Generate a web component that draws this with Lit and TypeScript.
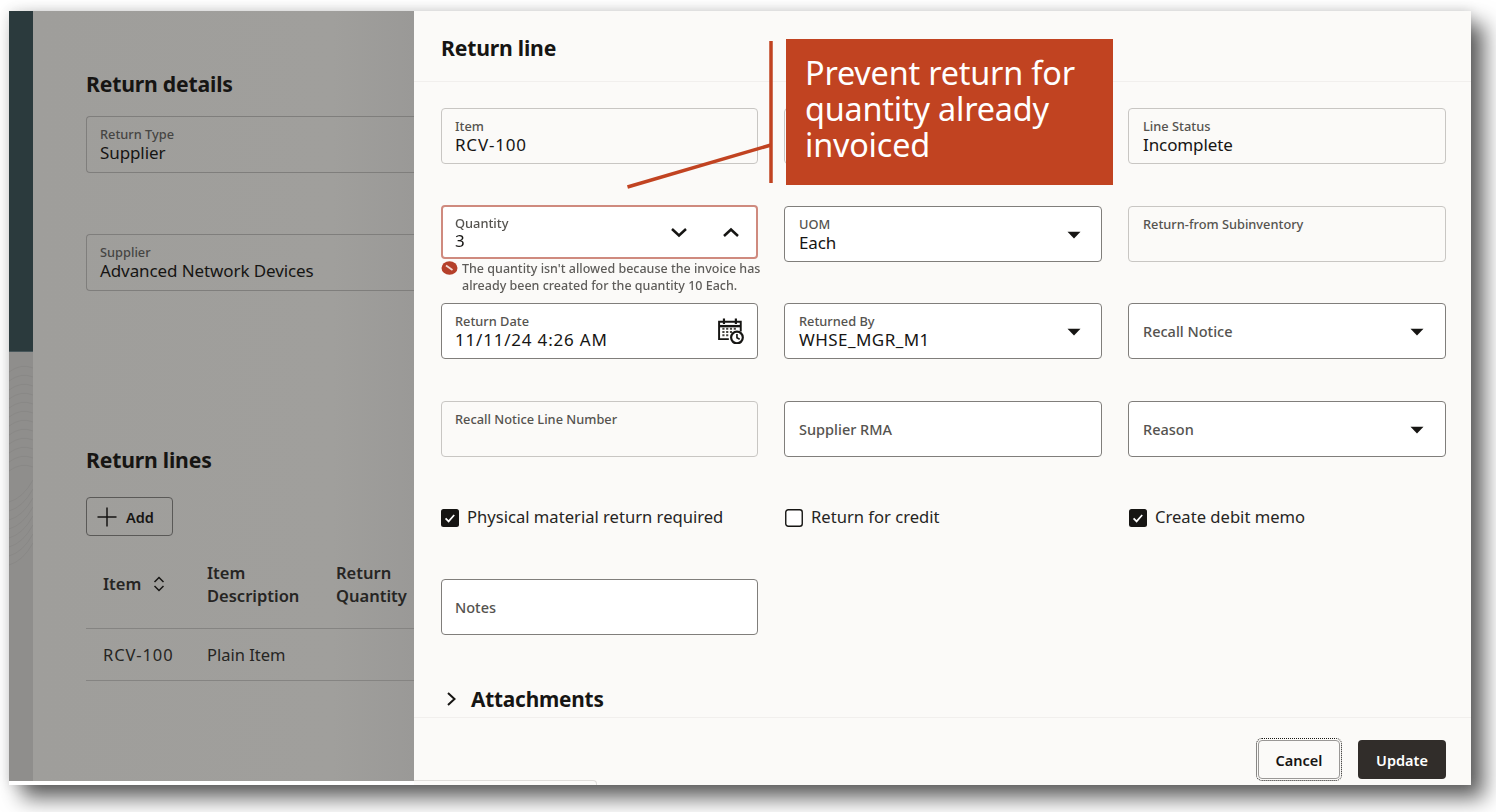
import { LitElement, html, css, svg } from "lit";
import { customElement } from "lit/decorators.js";

const caret = html`<svg class="caret" width="14" height="8" viewBox="0 0 14 8"><path d="M0.5 0.8h13L7 7.4z" fill="#161513"/></svg>`;
const check = html`<svg viewBox="0 0 18 18" width="18" height="18"><rect x="0" y="0" width="18" height="18" rx="2.5" fill="#161513"/><path d="M4.6 9.4l3 3 5.6-6.4" fill="none" stroke="#fff" stroke-width="1.7"/></svg>`;
const uncheck = html`<svg viewBox="0 0 18 18" width="18" height="18"><rect x=".75" y=".75" width="16.5" height="16.5" rx="2.5" fill="#fff" stroke="#161513" stroke-width="1.4"/></svg>`;
const calendar = html`<svg class="cal" width="26" height="26" viewBox="1 1 24 24" fill="none" stroke="#161513">
  <path d="M11 20.5H2V4.5h20v9" stroke-width="1.8"/>
  <path d="M2 8.5h20" stroke-width="2.2"/>
  <path d="M6.5 1.5v5M17.5 1.5v5" stroke-width="2"/>
  <path d="M5 11h2M8.5 11h2M12 11h2M15.500 11h2M5 14h2M8.5 14h2M12 14h2M5 17h2M8.5 17h2" stroke-width="1.8" stroke="#45433f"/>
  <circle cx="18.500" cy="19" r="5.400" stroke-width="2" fill="#fff"/>
  <path d="M18.500 15.800V19.300L21 20.600" stroke-width="1.500"/>
</svg>`;

@customElement("app-root")
export class AppRoot extends LitElement {
  static styles = css`
    :host { display: block; width: 1496px; height: 812px; overflow: hidden; background: #fff;
      font-family: "Noto Sans", "Liberation Sans", sans-serif; color: #161513; padding: 11px 25px 27px 9px; box-sizing: border-box; }
    * { box-sizing: border-box; }
    .window { position: relative; height: 774px; background: #fff;
      box-shadow: 13px 13px 20px rgba(0,0,0,.62), 0 0 12px rgba(0,0,0,.14); }
    .page { display: flex; height: 770px; background: #9f9e9b; overflow: hidden; }
    .rail { width: 24px; flex: none; display: flex; flex-direction: column; box-shadow: inset -1px 0 0 rgba(0,0,0,.06); }
    .rail-top { height: 341px; background: #2b3a3d; border-bottom: 1px solid #47565a; }
    .rail-bottom { flex: 1; background: #8f8e8c; }
    .rail-bottom svg { display: block; }
    .main { flex: 1; padding: 59px 0 0 53px; min-width: 0; background: linear-gradient(90deg, #9f9e9b 0, #a09f9c 300px, #9a9997 381px); }
    h2 { margin: 0; font-size: 21.200px; line-height: 28px; font-weight: 700; color: #161513; letter-spacing: -.2px; white-space: nowrap; }
    .bg-field { height: 57px; margin-top: 18px; border: 1px solid #7f7e7c; border-right: 0; border-radius: 4px 0 0 4px; padding: 10px 13px 0; }
    .bg-field + .bg-field { margin-top: 61px; }
    .bg-field .lbl { color: #464543; }
    .main h2.lines { margin-top: 155px; }
    .add { display: inline-flex; align-items: center; gap: 9px; width: 87px; height: 39px; margin-top: 23px; padding-left: 10px; border: 1px solid #5a5957; border-radius: 4px; font-size: 14.500px; font-weight: 600; }
    .table { margin-top: 4px; }
    .tr { display: grid; grid-template-columns: 104px 129px auto; border-bottom: 1px solid #858482; padding-left: 17px; align-items: center; }
    .head { height: 89px; font-size: 16.500px; line-height: 23.500px; font-weight: 600; color: #262523; }
    .head div { white-space: nowrap; }
    .body { height: 52px; padding-bottom: 1px; font-size: 16.500px; color: #262523; }
    .num { letter-spacing: .9px; }
    .sort { display: inline-block; vertical-align: -2px; margin-left: 12px; }

    .drawer { position: absolute; left: 405px; top: 0; right: 0; bottom: 0; background: #fbfaf8; display: flex; flex-direction: column; }
    .d-head { height: 71px; padding: 22px 0 0 27px; border-bottom: 1px solid #f1efed; font-size: 21.200px; line-height: 30px; font-weight: 700; letter-spacing: -.2px; }
    .d-body { flex: 1; padding: 26px 25px 0 27px; border-bottom: 1px solid #f1efed; min-height: 0; }
    .grid { display: grid; grid-template-columns: 317px 318px 318px; column-gap: 26px; grid-template-rows: 98px 97px 98px 97px 81px 92px; }
    .f { height: 56px; border: 1px solid #c8c6c3; border-radius: 4px; padding: 10px 13px 0; position: relative; }
    .grid > .f:nth-child(3n+2), .grid > .f:nth-child(3n) { padding-left: 14px; }
    .grid > .f:nth-child(3n+2) .caret { right: 20px; }
    .f.edit { background: #fff; border-color: #807e7b; }
    .lbl { font-size: 12.800px; line-height: 15px; font-weight: 500; color: #55534f; white-space: nowrap; }
    .val { font-size: 17px; line-height: 21px; letter-spacing: -.1px; color: #161513; white-space: nowrap; }
    .val.digits { letter-spacing: .8px; }
    .val.caps { letter-spacing: .45px; }
    .f.ph { display: flex; align-items: center; padding-top: 0; font-size: 14.500px; font-weight: 500; color: #55534f; }
    .caret { position: absolute; right: 21px; top: 24px; }
    .cal { position: absolute; right: 13px; top: 14px; }
    .f.edit.qty { border-color: #cf8a7e; border-width: 2px; height: 54px; margin-top: -1px; padding: 9px 12px 0; filter: blur(.4px); }
    .qty .val { margin-top: -1px; }
    .qty svg { position: absolute; top: 20px; }
    .err { display: flex; gap: 4px; margin: 2px -3px 0 0; font-size: 12.500px; font-weight: 500; line-height: 16.500px; color: #5e5c59; filter: blur(.6px); white-space: nowrap; }
    .err svg { flex: none; }
    .chk { display: flex; align-items: flex-start; gap: 8px; padding-top: 8px; font-size: 16.600px; line-height: 22px; color: #262523; white-space: nowrap; }
    .chk svg { margin-top: 3px; }
    .chk.inset { padding-left: 1px; }
    .att { display: flex; align-items: center; gap: 14px; margin: 0; padding: 18px 0 0 5px; height: 37px; font-size: 20.800px; font-weight: 700; letter-spacing: -.2px; white-space: nowrap; }
    .d-foot { height: 67px; display: flex; justify-content: flex-end; gap: 18px; padding: 22px 25px 0 0; flex: none; }
    .btn { width: 88px; height: 39px; display: flex; align-items: center; justify-content: center; border-radius: 4px; font-size: 14.500px; font-weight: 600; }
    .btn.cancel { width: 82px; border: 1px solid #9a9896; outline: 1px dotted #161513; outline-offset: 1px; }
    .btn.update { background: #312d2a; color: #fff; }
    .edge { position: absolute; left: 405px; width: 183px; top: 769px; height: 5px; border: 1px solid #dfddda; border-bottom: 0; border-left: 0; border-radius: 0 4px 0 0; background: #fbfaf8; }

    .callout { position: absolute; left: 777px; top: 28px; width: 327px; height: 146px; background: #c14321; color: #fff; padding: 15px 0 0 19px; font-size: 32.400px; line-height: 36px; letter-spacing: -.2px; white-space: nowrap; }
    .leader { position: absolute; left: 610px; top: 26px; pointer-events: none; }
  `;

  render() {
    return html`<div class="window">
      <div class="page">
        <div class="rail">
          <div class="rail-top"></div>
          <div class="rail-bottom">
            <svg width="24" height="260" viewBox="0 0 24 260" fill="none" stroke="#7f7e7c" stroke-width=".7" opacity=".55">
              ${[0,1,2,3,4,5,6,7,8,9,10,11].map(i => svg`<path d="M0 ${20+i*9}q12 -9 24 -4"/>`)}
              ${[0,1,2,3,4,5,6,7].map(i => svg`<path d="M0 ${150+i*9}q14 -4 24 -22"/>`)}
            </svg>
          </div>
        </div>
        <div class="main">
          <h2>Return details</h2>
          <div class="bg-field"><div class="lbl">Return Type</div><div class="val">Supplier</div></div>
          <div class="bg-field"><div class="lbl">Supplier</div><div class="val">Advanced Network Devices</div></div>
          <h2 class="lines">Return lines</h2>
          <div class="add"><svg width="20" height="20" viewBox="0 0 20 20"><path d="M10 .5v19M.5 10h19" stroke="#161513" stroke-width="1.500"/></svg>Add</div>
          <div class="table">
            <div class="tr head">
              <div>Item<svg class="sort" width="12" height="16" viewBox="0 0 12 16" fill="none" stroke="#161513" stroke-width="1.500"><path d="M1.500 6L6 1.500 10.500 6M1.500 10L6 14.500 10.500 10"/></svg></div>
              <div>Item<br>Description</div>
              <div>Return<br>Quantity</div>
            </div>
            <div class="tr body"><div class="num">RCV-100</div><div>Plain Item</div><div></div></div>
          </div>
        </div>
      </div>

      <div class="drawer">
        <div class="d-head">Return line</div>
        <div class="d-body">
          <div class="grid">
            <div class="f"><div class="lbl">Item</div><div class="val digits">RCV-100</div></div>
            <div class="f"></div>
            <div class="f"><div class="lbl">Line Status</div><div class="val">Incomplete</div></div>

            <div>
              <div class="f edit qty">
                <div class="lbl">Quantity</div><div class="val">3</div>
                <svg style="right:68px" width="18" height="11" viewBox="0 0 18 11" fill="none" stroke="#161513" stroke-width="2.500"><path d="M2 2l7 6.500L16 2"/></svg>
                <svg style="right:16px" width="18" height="11" viewBox="0 0 18 11" fill="none" stroke="#161513" stroke-width="2.500"><path d="M2 9l7-6.500L16 9"/></svg>
              </div>
              <div class="err">
                <svg width="17" height="14" viewBox="0 0 17 14"><ellipse cx="8.500" cy="7" rx="8" ry="6.700" fill="#b5402a"/><path d="M5 4.500l6.500 4.500" stroke="#f3d9d3" stroke-width="1.800"/></svg>
                <span>The quantity isn't allowed because the invoice has<br>already been created for the quantity 10 Each.</span>
              </div>
            </div>
            <div class="f edit"><div class="lbl">UOM</div><div class="val">Each</div>${caret}</div>
            <div class="f"><div class="lbl">Return-from Subinventory</div></div>

            <div class="f edit"><div class="lbl">Return Date</div><div class="val digits">11/11/24 4:26 AM</div>${calendar}</div>
            <div class="f edit"><div class="lbl">Returned By</div><div class="val caps">WHSE_MGR_M1</div>${caret}</div>
            <div class="f edit ph">Recall Notice${caret}</div>

            <div class="f"><div class="lbl">Recall Notice Line Number</div></div>
            <div class="f edit ph">Supplier RMA</div>
            <div class="f edit ph">Reason${caret}</div>

            <div class="chk">${check}Physical material return required</div>
            <div class="chk inset">${uncheck}Return for credit</div>
            <div class="chk inset">${check}Create debit memo</div>

            <div class="f edit ph">Notes</div>
          </div>
          <div class="att"><svg width="11" height="16" viewBox="0 0 11 16" fill="none" stroke="#161513" stroke-width="2"><path d="M2 2l6.500 6L2 14"/></svg>Attachments</div>
        </div>
        <div class="d-foot">
          <div class="btn cancel">Cancel</div>
          <div class="btn update">Update</div>
        </div>
      </div>
      <div class="edge"></div>

      <div class="callout">Prevent return for<br>quantity already<br>invoiced</div>
      <svg class="leader" width="170" height="156" viewBox="0 0 170 156" fill="none" stroke="#c14321">
        <path d="M152 4V146" stroke-width="3.500"/>
        <path d="M8.500 150L152 108" stroke-width="3.500"/>
      </svg>
    </div>`;
  }
}
